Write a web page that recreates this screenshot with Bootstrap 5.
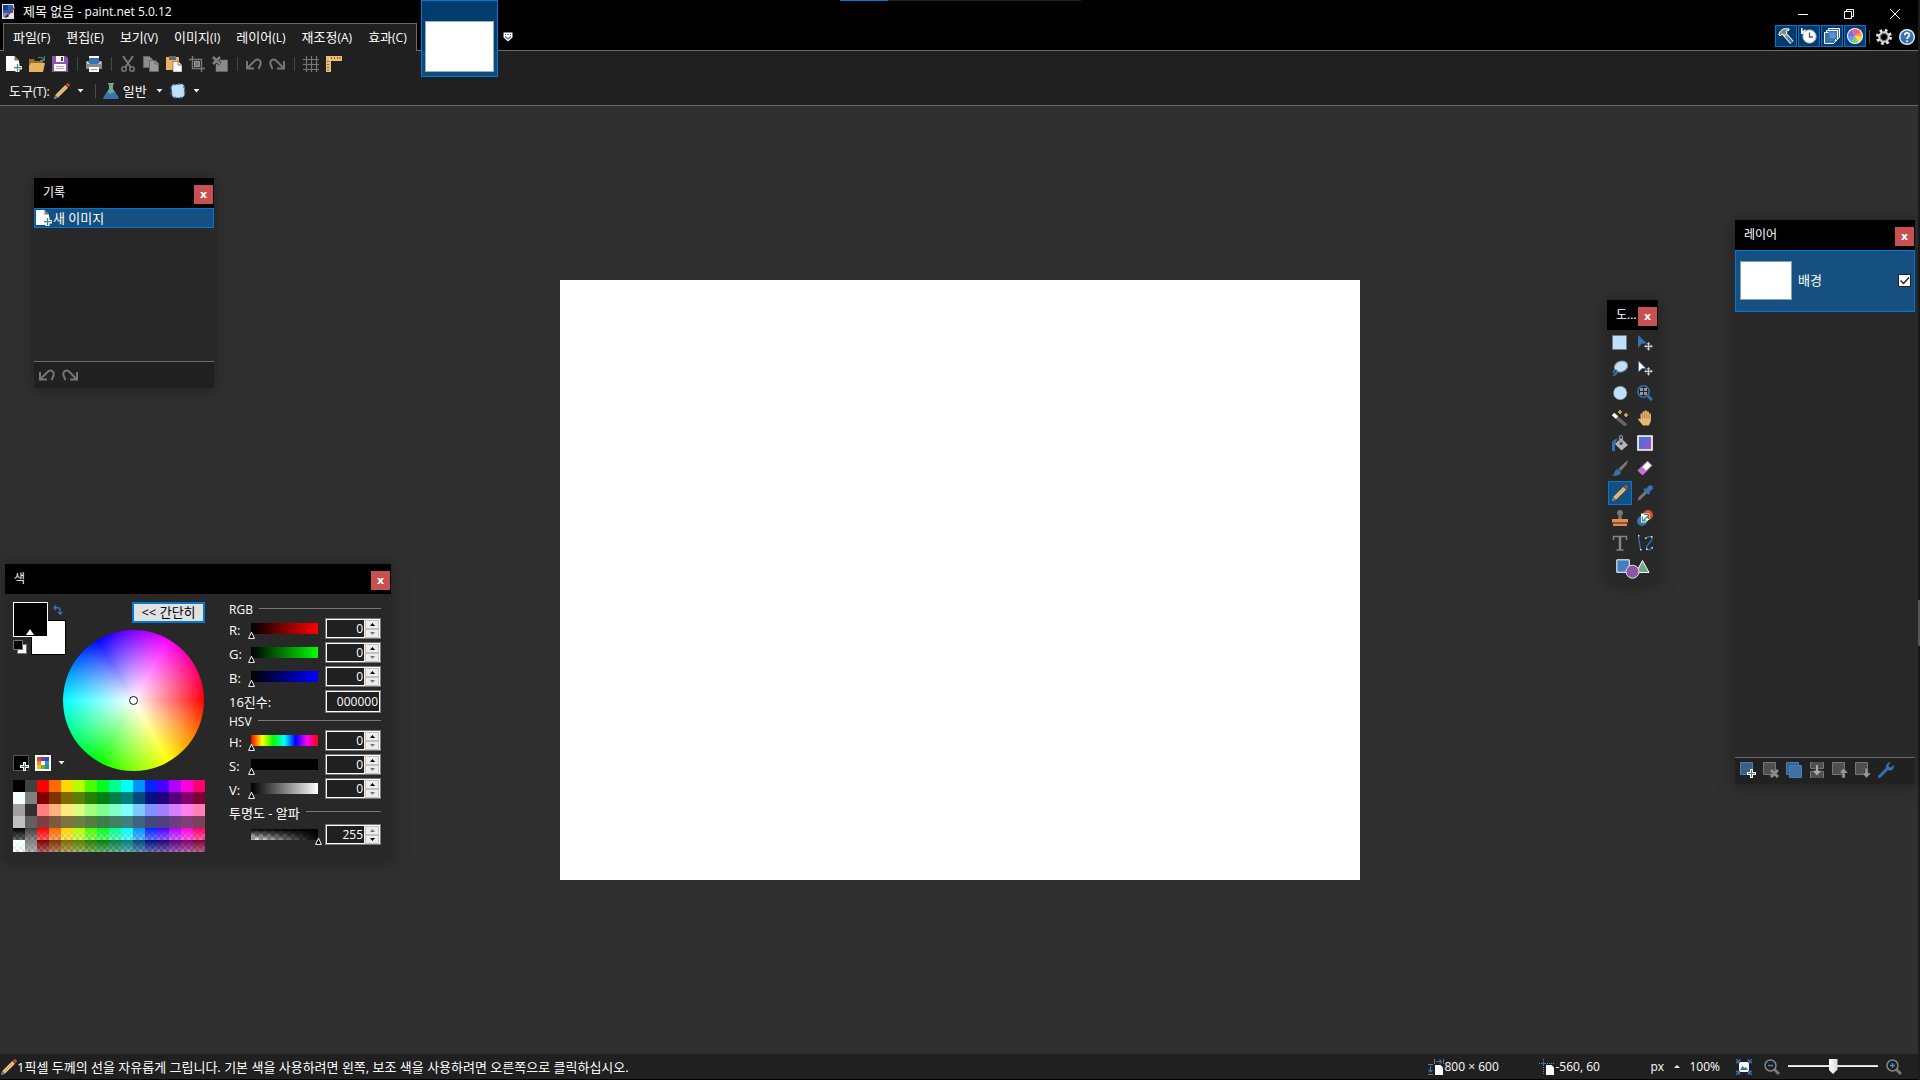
<!DOCTYPE html>
<html lang="ko" data-bs-theme="dark">
<head>
<meta charset="utf-8">
<meta name="viewport" content="width=device-width, initial-scale=1">
<title>제목 없음 - paint.net 5.0.12</title>
<link href="https://cdn.jsdelivr.net/npm/bootstrap@5.3.0/dist/css/bootstrap.min.css" rel="stylesheet">
<style>
:root{--line:#6a6a6a;--bar:#202020;--pane:#282828;--accent:#0078d7;--sel:#155080}
body{font:13px/16px "Open Sans","Noto Sans CJK KR",sans-serif;background:#303030;color:#fff;overflow:hidden}
svg{display:block;flex:none}
.ic{width:16px;height:16px}
.lat{font-size:12px}
button.plain,.tool{background:none;border:0;padding:0;color:inherit;line-height:16px}
.app{border-right:2px solid #1b1b1b}
.edge-mark{right:0;top:600px;width:2px;height:46px;background:#555}
/* header */
.top-bar{background:#000;height:50px}
.title-row{height:23px;padding-left:2px}
.title-row .caption{margin-left:8px}
.win-btns{gap:36px;padding-right:18px;padding-top:4px}
.menu-tab{height:28px;margin-left:3px;border:1px solid var(--line);border-bottom:0;background:var(--bar);padding:0 1px;z-index:1}
.menu-tab a{color:#fff;text-decoration:none;padding:5px 8px}
.toggles{gap:1px;margin-top:2px;padding-right:3px}
.toggles .tog{width:22px;height:22px;border:1px solid var(--accent);background:#003c6c;padding:0 2px}
.toggles .vsep{margin:5px 5px 0 2px}
.toggles .plain{margin-top:2px}
.toggles .plain+.plain{margin-left:6px}
.progress-line{left:840px;top:0;width:241px;height:1px;background:#222}
.progress-line div{width:48px;height:1px;background:var(--accent)}
.doc-tab{left:421px;top:0;width:77px;height:77px;border:1px solid var(--accent);background:linear-gradient(#003c6c 0 50px,#124a78 50px);padding:20px 3px 4px;z-index:2}
.doc-tab span{display:block;height:51px;background:#fff;border:1px solid #8fb2cd}
.doc-more{left:503px;top:32px}
.bars{background:var(--bar);border-top:1px solid var(--line);border-bottom:1px solid var(--line)}
.bar1{height:26px;padding-left:6px;gap:7px}
.bar2{height:28px;padding-left:9px}
.vsep{width:1px;height:14px;background:#4a4a4a}
.bar1 .vsep{margin:0 1px 0 2px}
.bar2 .vsep{margin:0 7px 0 11px}
.caret{width:7px;height:4px}
.caret.up{width:6px;height:3px}
.after-icon{margin-left:7px}
.after-text{margin-left:9px}
.foot-gap{margin-left:12px}
.well-row{gap:6px}
/* work area */
main.work{padding-left:2px}
.canvas-page{width:800px;height:600px;background:#fff}
.pane{position:absolute;background:var(--pane);box-shadow:0 1px 14px 2px rgba(0,0,0,.28)}
.pane-head{height:30px;background:#000;padding:7px 1px 0 9px}
.pane-head .cls{width:19px;height:19px;border:0;padding:0;background:#c75050;color:#fff;font:bold 11px/16px "DejaVu Sans",sans-serif}
.pane-head h2{font-size:12px;line-height:16px;margin:0;font-weight:400}
.pane-foot{background:#212121;border-top:1px solid var(--line);height:27px;gap:7px;padding:0 0 2px 5px}
#history{left:34px;top:72px;width:180px;height:210px}
#history .pane-foot{padding-bottom:0}
#history .entry{height:20px;border:1px solid var(--accent);background:var(--sel);padding-left:1px;gap:1px}
#layers{right:3px;top:114px;width:180px;height:564px}
#layers .layer{height:62px;border:1px solid var(--accent);background:var(--sel);padding:0 3px 2px 4px}
#layers .thumb{width:52px;height:39px;background:#fff;border:1px solid #7ba3c4;margin-right:6px}
.vis{appearance:none;width:13px;height:13px;border:1px solid #222;background:#fff url("data:image/svg+xml,%3Csvg xmlns='http://www.w3.org/2000/svg' viewBox='0 0 11 11'%3E%3Cpath d='M1.5 5.5l3 3L10 2.5' fill='none' stroke='%23222' stroke-width='1.4'/%3E%3C/svg%3E");margin:0}
#tools{right:260px;top:194px;width:51px;height:283px}
.tool-grid{display:grid;grid-template-columns:24px 24px;gap:1px;padding:1px}
.tool{width:24px;height:24px;display:grid;place-items:center}
.tool.on{border:1px solid var(--accent);background:var(--sel)}
.tool.wide{grid-column:1/3;width:100%;height:26px}
/* colour window */
#colors{left:5px;top:458px;width:386px}
.col-body{padding:8px 10px 8px 8px}
.left-side{width:192px}
.well{width:50px;height:169px}
.swatches{width:53px;height:53px;z-index:1}
.swatches i{position:absolute;width:35px;height:35px;border:1px solid #000}
.swatches .sw-a{left:0;top:0;background:#000;border-color:#fff}
.sw-b{left:18px;top:18px;background:#fff}
.swatches .swap{position:absolute;left:40px;top:3px}
.swatches .tip{position:absolute;left:13px;top:27px}
.mini{position:absolute;left:0;top:38px}
.simple{width:73px;height:21px;border:2px solid var(--accent);background:#e1e1e1;color:#000;font-size:13px;line-height:17px;padding:0}
.wheel{width:141px;height:141px;border-radius:50%;margin-top:7px;display:grid;place-items:center;background:radial-gradient(closest-side,#fff,rgba(255,255,255,0)),conic-gradient(from 90deg,red,#ff0,lime,cyan,blue,magenta,red)}
.wheel b{width:9px;height:9px;border:1px solid #111;border-radius:50%;background:#fff}
.pal{display:grid;grid-template-columns:repeat(16,12px);grid-auto-rows:12px;margin-top:9px;background:repeating-conic-gradient(#fff 0 25%,#bbb 0 50%) 0 0/6px 6px}
.right-side{width:152px}
.legend-row{height:16px;gap:6px;align-items:flex-start}
.legend-row hr{flex:1;margin:6px 0 0;border:0;border-top:1px solid #787878;opacity:1}
.legend-row.alpha{height:22px;padding-top:3px}
.field{display:grid;grid-template-columns:22px 74px 56px;height:24px;align-items:start}
.field label{padding-top:4px;white-space:nowrap}
.field .val{grid-column:3}
.sl{appearance:none;width:74px;height:16px;margin:5px 0 0 -3px;padding:0;background:var(--g) no-repeat 3px 0/67px 11px;outline:0}
.sl::-webkit-slider-thumb{appearance:none;width:7px;height:8px;margin-top:7px;border:0;background:url("data:image/svg+xml,%3Csvg xmlns='http://www.w3.org/2000/svg' viewBox='0 0 7 8'%3E%3Cpath d='M3.5 1.2L6.4 7.4H.6z' fill='%23000' stroke='%23fff'/%3E%3C/svg%3E")}
.val{width:56px;height:21px;border:1px solid #787878;background:#fff;padding:1px}
.val input{width:37px;height:17px;border:0;padding:0 1px 1px 0;background:#202020;color:#fff;text-align:right;font-size:12px;line-height:16px;appearance:textfield;outline:0}
.val input::-webkit-inner-spin-button{display:none}
.val.hex{height:23px}.val.hex input{width:100%;height:19px}
.spin{width:15px;background:#f0f0f0}
.spin button{border:1px solid #c4c4c4;background:#ececec;padding:0;height:9px;width:14px;margin-left:1px;display:grid;place-items:center}
.g-r{--g:linear-gradient(90deg,#000,red)}.g-g{--g:linear-gradient(90deg,#000,lime)}.g-b{--g:linear-gradient(90deg,#000,blue)}
.g-h{--g:linear-gradient(90deg,red,#ff0,lime,cyan,blue,magenta,red)}.g-s{--g:linear-gradient(#000,#000)}.g-v{--g:linear-gradient(90deg,#000,#fff)}
.g-a{--p:linear-gradient(var(--pane),var(--pane)) no-repeat;background:var(--p) 0 11px/74px 5px,var(--p) 0 0/3px 16px,var(--p) 70px 0/4px 16px,linear-gradient(90deg,rgba(0,0,0,0),#000) no-repeat 3px 0/67px 11px,linear-gradient(#000,rgba(0,0,0,0)) no-repeat 3px 0/67px 11px,repeating-conic-gradient(#fff 0 25%,#bbb 0 50%) 3px 0/8px 8px}
/* status */
.status{height:26px;background:var(--bar);border-bottom:1px solid #000;padding:0 16px 0 1px}
.status .size{width:111px}.status .pos{width:95px}.status .unit{width:24px}
.zoom-sl{appearance:none;width:90px;height:16px;margin:0 8px;background:linear-gradient(#ccc,#fff) no-repeat 0 6px/90px 2px}
.zoom-sl::-webkit-slider-thumb{appearance:none;width:9px;height:15px;border:0;background:linear-gradient(90deg,#fff,#d8d8d8);clip-path:polygon(0 0,100% 0,100% 70%,50% 100%,0 70%)}
</style>
<script src="https://cdn.jsdelivr.net/npm/bootstrap@5.3.0/dist/js/bootstrap.bundle.min.js"></script>
</head>
<body>
<svg width="0" height="0" class="position-absolute" aria-hidden="true">
<symbol id="new" viewBox="0 0 16 16"><path d="M0 0h8.500L13 4.500V15H0z" fill="#fff"/><path d="M8.500 0v4.500H13z" fill="#777"/><path d="M9.500 7h4v3H16v3.500h-2.500V16h-4v-2.500H7V10h2.500z" fill="#fff"/><path d="M11.500 8v7.500M8 11.700h7.500" stroke="#3f8e73" stroke-width="1.300"/></symbol>
<symbol id="open" viewBox="0 0 16 16"><path d="M0 3h5l1 2h8v3H0z" fill="#96702f"/><path d="M2 7h14l-2 9H0V9z" fill="#e9b263"/><path d="M9 1.500h3.500L15 4M15.500 0v4.500H11" fill="none" stroke="#3f8e73" stroke-width="1.200"/></symbol>
<symbol id="save" viewBox="0 0 16 16"><path d="M0 0h14l2 2v14H0z" fill="#8e54a5"/><path d="M4 0h8v6H4zM2 8h12v7H2z" fill="#fff"/><path d="M9 1h2v4H9z" fill="#444"/><path d="M4 10.500h8M4 12.500h8" stroke="#aaa"/></symbol>
<symbol id="print" viewBox="0 0 16 16"><path d="M3 0h10v6H3z" fill="#fff"/><path d="M0 5h16v8H0z" fill="#8b8b8b"/><path d="M3 2h10v6H3z" fill="#3573b4"/><path d="M3 11h10v5H3z" fill="#fff"/><path d="M5 13.500h6" stroke="#999"/><path d="M1.500 6v1.500h2M14.500 6v1.500h-2" fill="none" stroke="#ddd"/></symbol>
<symbol id="cut" viewBox="0 0 16 16" fill="none" stroke="#777" stroke-width="2"><path d="M3 0l7.500 11M13 0L5.500 11"/><circle cx="4" cy="13" r="2.200" stroke-width="1.600"/><circle cx="12" cy="13" r="2.200" stroke-width="1.600"/></symbol>
<symbol id="copy" viewBox="0 0 16 16" fill="#8d8d8d" stroke="#666"><path d="M.5.500h6l3 3v8h-9z"/><path d="M6.500 4.500h6l3 3v8h-9z" fill="#999"/><path d="M12 4.500V8h3.500" fill="none"/></symbol>
<symbol id="paste" viewBox="0 0 16 16"><path d="M0 1h13v13H0z" fill="#e9b263"/><path d="M3 0h7v4H3z" fill="#666"/><path d="M7 5.500h5.500L16 9v7H7z" fill="#fff" stroke="#555" stroke-width=".6"/><path d="M12 5.500V9h4" fill="none" stroke="#777"/></symbol>
<symbol id="crop" viewBox="0 0 16 16" fill="none" stroke="#777"><path d="M3.500 0v12.500H16M0 3.500h12.500V16" stroke-width="1.400"/><path d="M5.500 5.500h5v5h-5z" fill="#777" stroke="#999"/></symbol>
<symbol id="desel" viewBox="0 0 16 16"><path d="M4 4h11.500v11.500H4z" fill="#8a8a8a" stroke="#777" stroke-dasharray="1 1"/><path d="M1 1l7 7M8 1L1 8" stroke="#202020" stroke-width="4"/><path d="M1 1l7 7M8 1L1 8" stroke="#808080" stroke-width="2.600"/></symbol>
<symbol id="undo" viewBox="0 0 16 16" fill="none" stroke="#767676" stroke-width="2"><path d="M1 5v7.500h7M1.500 12L9 4.500c3-2.500 6.500 0 5.500 4L12.500 13"/></symbol>
<symbol id="grid" viewBox="0 0 16 16" fill="none" stroke="#777" stroke-width="1.200"><path d="M3.500 0v16M8.500 0v16M13.500 0v16M0 3.500h16M0 8.500h16M0 13.500h16"/></symbol>
<symbol id="ruler" viewBox="0 0 16 16"><path d="M0 0h16v5H5v11H0z" fill="#eabf7a"/><path d="M5.500 1v2M8.500 1v2M11.500 1v2M14 1v2M1 5.500h2M1 8.500h2M1 11.500h2M1 14h2" stroke="#8a6426"/><path d="M3 3h1v1H3z" fill="#fff"/></symbol>
<symbol id="pencil" viewBox="0 0 16 16"><path d="M0 16l1.500-4.200L11.300 2l2.700 2.700-9.800 9.800z" fill="#edc27e"/><path d="M3.500 12.500L12 4" stroke="#c9954c" stroke-width=".8"/><path d="M0 16l1.500-4.200 2.700 2.700z" fill="#777"/><path d="M11.800 1.500L13.300 0q2.700 0 2.700 2.700l-1.500 1.500z" fill="#c4432c"/></symbol>
<symbol id="flask" viewBox="0 0 16 16"><path d="M5 0h6v1l-1 1v4l5.500 8.500L15 16H1l-.5-1.500L6 6V2L5 1z" fill="#6fa890"/><path d="M3.500 9.500h2l2 1.500 2-1.500h3l3 5L15 16H1l-.5-1.500z" fill="#3573b4"/></symbol>
<symbol id="blob" viewBox="0 0 16 16"><path d="M3 1.500C6 3 9 0 13 1.500c3 3 0 6 1.500 9.500-.5 4-4 4-7 3.500-3 .5-5 0-5.500-3C3 8-.5 5 3 1.500z" fill="#bfe0fb" stroke="#8ab" stroke-width=".6"/><path d="M4 1.500h0M9 1h0M14 4h0M15 9h0M11 14.500h0M5 14.500h0M1 10h0M1 5h0" stroke="#3573b4" stroke-width="1.800" stroke-linecap="round"/></symbol>
<symbol id="caret" viewBox="0 0 7 4"><path d="M.5 0h6l-3 3.500z" fill="#eee"/></symbol>
<symbol id="zoomg" viewBox="0 0 16 16" fill="none"><path d="M10 10l5 5" stroke="#777" stroke-width="3"/><circle cx="6.500" cy="6.500" r="5.500" stroke="#858585" stroke-width="1.500"/></symbol>
<symbol id="sq" viewBox="0 0 16 16"><path d="M.5.500h12v12H.5z" fill="#4f4f4f" stroke="#757575"/></symbol>
<symbol id="movex" viewBox="0 0 16 16"><path d="M11.500 8v6.500M8.200 11.300h6.600" stroke="#ccc" stroke-width="1.300"/><path d="M9.700 9.200l1.800-2.200 1.800 2.200zM9.700 13.500l1.800 2.200 1.800-2.200zM9.300 9.500L7.100 11.300l2.200 1.800zM13.700 9.500l2.200 1.800-2.200 1.800z" fill="#ccc"/></symbol>
</svg>

<div class="app d-flex flex-column vh-100 position-relative">
<header class="position-relative">
 <div class="top-bar">
  <div class="title-row d-flex justify-content-between">
   <div class="d-flex align-items-center">
    <svg width="13" height="15" viewBox="0 0 13 15"><path d="M0 0h12v15H0z" fill="#dfe6ee"/><path d="M1 1h10v8H1z" fill="#2462c0"/><path d="M1 1h5v5H1z" fill="#173b8a"/><path d="M1 12h6M1 10h5" stroke="#336"/><path d="M13 3L5 12" stroke="#a33" stroke-width="1.500"/><path d="M6 10l-4 4 4-1z" fill="#223"/></svg>
    <span class="caption">제목 없음 <span class="lat">- paint.net 5.0.12</span></span>
   </div>
   <div class="win-btns d-flex">
    <button class="plain" aria-label="최소화"><svg width="10" height="12" viewBox="0 0 10 12"><path d="M0 6.500h10" stroke="#fff"/></svg></button>
    <button class="plain" aria-label="이전 크기로"><svg width="10" height="12" viewBox="0 0 10 12" fill="none" stroke="#fff"><path d="M.5 3.500h7v7h-7zM2.500 3V1.500h7v7H8"/></svg></button>
    <button class="plain" aria-label="닫기"><svg width="10" height="12" viewBox="0 0 10 12" stroke="#fff"><path d="M0 1l10 10M10 1L0 11"/></svg></button>
   </div>
  </div>
  <div class="d-flex justify-content-between align-items-start">
   <nav class="menu-tab d-flex position-relative" aria-label="메뉴">
    <a href="#">파일<span class="lat">(F)</span></a><a href="#">편집<span class="lat">(E)</span></a><a href="#">보기<span class="lat">(V)</span></a><a href="#">이미지<span class="lat">(I)</span></a><a href="#">레이어<span class="lat">(L)</span></a><a href="#">재조정<span class="lat">(A)</span></a><a href="#">효과<span class="lat">(C)</span></a>
   </nav>
   <div class="toggles d-flex">
    <button class="tog" aria-label="도구"><svg class="ic" viewBox="0 0 16 16"><path d="M5.500 5L14 14.500" stroke="#eee" stroke-width="4.500"/><path d="M5.500 5L9.500 9.500" stroke="#888" stroke-width="2.500"/><path d="M9.500 9.500l4.500 5" stroke="#3573b4" stroke-width="2.500"/><path d="M.7 6.500L2.500 3 5.500.800H11v1.500L8.500 3 8.700 5.500 6 8 4.300 5.800 2 8z" fill="#888" stroke="#fff"/></svg></button>
    <button class="tog" aria-label="기록"><svg class="ic" viewBox="0 0 16 16"><circle cx="8.500" cy="8.500" r="6.700" fill="#fff" stroke="#7fa8d2"/><path d="M8.500 4.500V9H12" fill="none" stroke="#555" stroke-width="1.300"/><path d="M.8 0v5.200H6M1.500 4.500L4.500 1.800" fill="none" stroke="#fff" stroke-width="1.600"/></svg></button>
    <button class="tog" aria-label="레이어"><svg class="ic" viewBox="0 0 16 16" stroke="#fff" fill="#3573b4"><path d="M4.500.500h11v9l-2 2h-9z"/><path d="M2.500 2.500h11v9l-2 2h-9z"/><path d="M.5 4.500h11v9l-2 2h-9z"/><path d="M5 4h7v6.500H5z" fill="#5b94ce" stroke="#4179b8"/></svg></button>
    <button class="tog" aria-label="색"><svg class="ic" viewBox="-8 -8 16 16"><circle r="8" fill="#fff"/><path d="M0 0V-7A7 7 0 0 1 6 -3.500z" fill="#ef6a5a"/><path d="M0 0L6-3.500A7 7 0 0 1 7 0z" fill="#f79646"/><path d="M0 0H7A7 7 0 0 1 3.500 6z" fill="#ffd84d"/><path d="M0 0L3.500 6A7 7 0 0 1-3.500 6z" fill="#8bc96a"/><path d="M0 0L-3.500 6A7 7 0 0 1-7 0z" fill="#5aa0ee"/><path d="M0 0H-7A7 7 0 0 1-3.500-6z" fill="#8e62d9"/><path d="M0 0L-3.500-6A7 7 0 0 1 0-7z" fill="#d35fd6"/></svg></button>
    <span class="vsep"></span>
    <button class="plain" aria-label="설정"><svg class="ic" viewBox="-8 -8 16 16" fill="none"><circle r="6.500" stroke="#e4e4e4" stroke-width="3" stroke-dasharray="2.600 2.505"/><circle r="4.600" stroke="#ddd" stroke-width="2.400"/><circle r="3.600" stroke="#777" stroke-width="1.200"/></svg></button>
    <button class="plain" aria-label="도움말"><svg class="ic" viewBox="0 0 16 16"><circle cx="8" cy="8" r="7.300" fill="#3573b4" stroke="#e6eef7" stroke-width="1.400"/><path d="M5.800 6.200c0-3 4.600-3 4.600-.2C10.400 7.800 8 7.800 8 10M8 11.500v1.600" fill="none" stroke="#fff" stroke-width="1.700"/></svg></button>
   </div>
  </div>
 </div>
 <div class="bars">
  <div class="bar1 d-flex align-items-center">
   <button class="plain" aria-label="새로 만들기"><svg class="ic"><use href="#new"/></svg></button>
   <button class="plain" aria-label="열기"><svg class="ic"><use href="#open"/></svg></button>
   <button class="plain" aria-label="저장"><svg class="ic"><use href="#save"/></svg></button>
   <span class="vsep"></span>
   <button class="plain" aria-label="인쇄"><svg class="ic"><use href="#print"/></svg></button>
   <span class="vsep"></span>
   <button class="plain" aria-label="잘라내기"><svg class="ic"><use href="#cut"/></svg></button>
   <button class="plain" aria-label="복사"><svg class="ic"><use href="#copy"/></svg></button>
   <button class="plain" aria-label="붙여넣기"><svg class="ic"><use href="#paste"/></svg></button>
   <button class="plain" aria-label="자르기"><svg class="ic"><use href="#crop"/></svg></button>
   <button class="plain" aria-label="선택 취소"><svg class="ic"><use href="#desel"/></svg></button>
   <span class="vsep"></span>
   <button class="plain" aria-label="실행 취소"><svg class="ic"><use href="#undo"/></svg></button>
   <button class="plain" aria-label="다시 실행"><svg class="ic" viewBox="0 0 16 16"><g transform="matrix(-1 0 0 1 16 0)"><use href="#undo" width="16" height="16"/></g></svg></button>
   <span class="vsep"></span>
   <button class="plain" aria-label="격자"><svg class="ic"><use href="#grid"/></svg></button>
   <button class="plain" aria-label="눈금자"><svg class="ic"><use href="#ruler"/></svg></button>
  </div>
  <div class="bar2 d-flex align-items-center">
   <span>도구<span class="lat">(T):</span></span>
   <button class="plain d-flex align-items-center ms-1" aria-label="연필"><svg class="ic"><use href="#pencil"/></svg><svg class="caret after-icon"><use href="#caret"/></svg></button>
   <span class="vsep"></span>
   <button class="plain d-flex align-items-center"><svg class="ic"><use href="#flask"/></svg><span class="ms-1">일반</span><svg class="caret after-text"><use href="#caret"/></svg></button>
   <button class="plain d-flex align-items-center after-icon" aria-label="선택 모드"><svg class="ic"><use href="#blob"/></svg><svg class="caret after-icon"><use href="#caret"/></svg></button>
  </div>
 </div>
 <div class="progress-line position-absolute"><div></div></div>
 <button class="doc-tab position-absolute" aria-label="제목 없음"><span></span></button>
 <button class="plain doc-more position-absolute" aria-label="이미지 목록"><svg width="10" height="10" viewBox="0 0 10 10"><path d="M.5.500h9v5L5 9.500.5 5.500z" fill="#fff"/><path d="M2 2.500h1M4.500 2.500h1M7 2.500h1" stroke="#333"/><path d="M2 4.500l3 2.500 3-2.500" fill="none" stroke="#3573b4" stroke-width="1.300"/></svg></button>
</header>

<main class="work flex-grow-1 position-relative d-flex align-items-center justify-content-center">
 <div class="canvas-page"></div>

 <section class="pane d-flex flex-column" id="history">
  <div class="pane-head d-flex justify-content-between align-items-start"><h2>기록</h2><button class="cls">x</button></div>
  <div class="entry d-flex align-items-center"><svg class="ic"><use href="#new"/></svg><span>새 이미지</span></div>
  <div class="pane-foot d-flex align-items-center mt-auto">
   <button class="plain" aria-label="실행 취소"><svg class="ic"><use href="#undo"/></svg></button>
   <button class="plain" aria-label="다시 실행"><svg class="ic" viewBox="0 0 16 16"><g transform="matrix(-1 0 0 1 16 0)"><use href="#undo" width="16" height="16"/></g></svg></button>
  </div>
 </section>

 <section class="pane" id="colors">
  <div class="pane-head d-flex justify-content-between align-items-start"><h2>색</h2><button class="cls">x</button></div>
  <div class="col-body d-flex justify-content-between">
   <div class="left-side">
    <div class="d-flex">
     <div class="well d-flex flex-column justify-content-between">
      <div class="swatches position-relative"><i class="sw-b"></i><i class="sw-a"></i>
       <svg class="tip" width="8" height="6" viewBox="0 0 8 6"><path d="M4 0l4 6H0z" fill="#fff"/></svg>
       <svg class="swap" width="10" height="10" viewBox="0 0 10 10" fill="none" stroke="#3573b4" stroke-width="1.400"><path d="M3 .500L1 2.700 3 5M1 2.700h4q2 0 2 2V9M5 7l2.200 2.200L9.500 7"/></svg>
       <svg class="mini" width="14" height="14" viewBox="0 0 14 14"><path d="M4.500 4.500h9v9h-9z" fill="#fff" stroke="#777"/><path d="M.5.500h9v9h-9z" stroke="#777"/></svg>
      </div>
      <div class="well-row d-flex align-items-center">
       <button class="plain" aria-label="색 추가"><svg class="ic" viewBox="0 0 16 16"><path d="M.5.500h15v15H.5z" stroke="#555"/><path d="M10 7h3v3h3v3h-3v3h-3v-3H7v-3h3z" fill="#fff"/><path d="M11.500 8v7M8 11.500h7" stroke="#3f8e73"/></svg></button>
       <button class="plain d-flex align-items-center" aria-label="팔레트"><svg class="ic" viewBox="0 0 16 16"><path d="M0 0h16v16H0z" fill="#fff"/><path d="M2 2h4v4H2z" fill="#d9472f"/><path d="M6 2h4v4H6z" fill="#7d3c98"/><path d="M10 2h4v4h-4z" fill="#3949a5"/><path d="M2 6h4v4H2z" fill="#f08a24"/><path d="M10 6h4v4h-4z" fill="#3c82f0"/><path d="M2 10h4v4H2z" fill="#f5b921"/><path d="M6 10h4v4H6z" fill="#6fae3a"/><path d="M10 10h4v4h-4z" fill="#2c9a5c"/></svg><svg class="caret after-icon"><use href="#caret"/></svg></button>
      </div>
     </div>
     <div class="flex-grow-1 d-flex flex-column"><button class="simple align-self-end">&lt;&lt; 간단히</button><div class="wheel"><b></b></div></div>
    </div>
    <div class="pal" id="pal"></div>
   </div>
   <div class="right-side" id="fields"></div>
  </div>
 </section>

 <section class="pane" id="tools">
  <div class="pane-head d-flex justify-content-between align-items-start"><h2>도...</h2><button class="cls">x</button></div>
  <div class="tool-grid">
   <button class="tool" aria-label="사각형 선택"><svg class="ic" viewBox="0 0 16 16"><path d="M.5.500h14v14H.5z" fill="#bfe0fb" stroke="#777" stroke-dasharray="1 1"/></svg></button>
   <button class="tool" aria-label="선택 픽셀 이동"><svg class="ic" viewBox="0 0 16 16"><path d="M1 0l9 8.500H5L1 13z" fill="#3573b4"/><use href="#movex" width="16" height="16"/></svg></button>
   <button class="tool" aria-label="올가미 선택"><svg class="ic" viewBox="0 0 16 16"><ellipse cx="9" cy="6.500" rx="6.800" ry="5.300" transform="rotate(-20 9 6.500)" fill="#bfe0fb" stroke="#889"/><path d="M1 15.500c2 0 4-2 4-4s-3-2-3.500 0 2 2 4 1" fill="none" stroke="#3573b4" stroke-width="1.500"/></svg></button>
   <button class="tool" aria-label="선택 영역 이동"><svg class="ic" viewBox="0 0 16 16"><path d="M1.500 1l7.500 7.500H5L1.500 12z" fill="#fff" stroke="#3573b4" stroke-width=".8"/><use href="#movex" width="16" height="16"/></svg></button>
   <button class="tool" aria-label="타원 선택"><svg class="ic" viewBox="0 0 16 16"><circle cx="8.200" cy="8" r="6.700" fill="#bfe0fb" stroke="#889" stroke-dasharray="1 1"/></svg></button>
   <button class="tool" aria-label="확대/축소"><svg class="ic" viewBox="0 0 16 16"><path d="M11 11l4 4" stroke="#3573b4" stroke-width="3"/><circle cx="6.500" cy="6.500" r="5.700" fill="#222" stroke="#3573b4" stroke-width="1.600"/><path d="M3 3h3v3H3zM7 3h3v3H7zM3 7h3v3H3zM7 7h3v3H7z" fill="#999"/></svg></button>
   <button class="tool" aria-label="요술봉"><svg class="ic" viewBox="0 0 16 16"><path d="M3 6L14 15.500" stroke="#666" stroke-width="3.500"/><path d="M1 4l4 3.500" stroke="#fff" stroke-width="3.500"/><path d="M8 0v4M6 2h4M14 3v4M12 5h4" stroke="#e9a84a" stroke-width="1.600"/></svg></button>
   <button class="tool" aria-label="팬"><svg class="ic" viewBox="0 0 16 16"><path d="M3.500 10V4q1-1.500 2 0V2q1-1.600 2 0V1q1.200-1.500 2.200 0v1q1-1.500 2.200 0v2q1-1.500 2 0V11l-2 4.500H6L1 9.500q.5-2 2.500-.3z" fill="#e3b672"/><path d="M5.700 4v4.500M7.700 2.500v6M9.800 2.500v6M12 4v4.500" stroke="#a9752d" stroke-width=".7"/></svg></button>
   <button class="tool" aria-label="페인트 통"><svg class="ic" viewBox="0 0 16 16"><path d="M0 16V8q0-3 5.500-4.500L3 9v7z" fill="#3573b4"/><path d="M9 3l7 7-6.500 5.500L3 9z" fill="#b5b5b5"/><path d="M7.500 7V2q1.500-3 3 0v6" fill="none" stroke="#888" stroke-width="1.300"/><circle cx="9" cy="8.500" r="1.500" fill="#444"/></svg></button>
   <button class="tool" aria-label="그라데이션"><svg class="ic" viewBox="0 0 16 16"><defs><linearGradient id="gd" x2="1" y2="1"><stop stop-color="#2f7be0"/><stop offset="1" stop-color="#b04cc0"/></linearGradient></defs><path d="M1 1h14v14H1z" fill="url(#gd)" stroke="#fff" stroke-width="1.600"/></svg></button>
   <button class="tool" aria-label="그림판 붓"><svg class="ic" viewBox="0 0 16 16"><path d="M16 0l-1 4-6 7-2.500-2.500L12.500 3z" fill="#777"/><path d="M6 9l3 3c-1 4-5 4-9 3.500 3-1 2-6 6-6.500z" fill="#3573b4"/></svg></button>
   <button class="tool" aria-label="지우개"><svg class="ic" viewBox="0 0 16 16"><path d="M10.500 1L15 5.500 5.500 15 1 10.500z" fill="#fff" stroke="#9a4fae"/><path d="M5 6.500L9.500 11l-4 4L1 10.500z" fill="#c46fd6"/></svg></button>
   <button class="tool on" aria-label="연필"><svg class="ic"><use href="#pencil"/></svg></button>
   <button class="tool" aria-label="색 선택"><svg class="ic" viewBox="0 0 16 16"><path d="M9.500 6.500L2 14" stroke="#777" stroke-width="3"/><path d="M2.500 12L0 16l4-2z" fill="#777"/><path d="M7 3l2 1 3-3.500q4-1 4 3L12.500 7l.5 2-2 .5L6.500 5z" fill="#3573b4"/></svg></button>
   <button class="tool" aria-label="도장 복제"><svg class="ic" viewBox="0 0 16 16"><circle cx="8" cy="3" r="3" fill="#777"/><path d="M7 4h2l1 5H6z" fill="#777"/><path d="M0 9h16v3.500H0zM1 13.500h14V16H1z" fill="#e8894a"/></svg></button>
   <button class="tool" aria-label="색상 변경"><svg class="ic" viewBox="0 0 16 16"><circle cx="11" cy="5" r="5" fill="#d9532f"/><circle cx="5" cy="11" r="5" fill="#3573b4"/><path d="M4 3.500h8.500V9L9 12.500H4V8z" fill="#fff"/><path d="M11.500 5.500L6 11M5.500 6.500V11H10M7 4.500h4.500V9" fill="none" stroke="#3f8e73" stroke-width="1.200"/></svg></button>
   <button class="tool" aria-label="텍스트"><svg class="ic" viewBox="0 0 16 16"><path d="M1.500 5V1.500h13V5M4.500 15h7" stroke="#858585" stroke-width="1.500" fill="none"/><path d="M8 1v14" stroke="#858585" stroke-width="2.500"/></svg></button>
   <button class="tool" aria-label="선/곡선"><svg class="ic" viewBox="0 0 16 16"><path d="M1.500 2L3.500 14M9 3c4-3 8-1 5 3s-6 6-4 8 3 0 5-1" fill="none" stroke="#3573b4" stroke-width="1.300"/><path d="M1 0h1.500v1.500H1zM3 14h1.500v1.500H3zM8 2.500h1.500V4H8zM14 1h1.500v1.500H14zM9 13.500h1.500V15H9zM14.500 12H16v1.500h-1.500z" fill="#dbe9f7"/></svg></button>
   <button class="tool wide" aria-label="도형"><svg width="34" height="20" viewBox="0 0 34 20"><path d="M.8.800h12.500v12.500H.8z" fill="#4380c0" stroke="#fff"/><path d="M26.500 1.500L33 13.500H20z" fill="#6fa890" stroke="#fff"/><circle cx="16.500" cy="12.700" r="6.500" fill="#8e54a5" stroke="#e8d8ef"/></svg></button>
  </div>
 </section>

 <section class="pane d-flex flex-column" id="layers">
  <div class="pane-head d-flex justify-content-between align-items-start"><h2>레이어</h2><button class="cls">x</button></div>
  <div class="layer d-flex align-items-center"><span class="thumb"></span><label for="vis">배경</label><input type="checkbox" id="vis" class="vis ms-auto" checked></div>
  <div class="pane-foot d-flex align-items-center mt-auto">
   <button class="plain" aria-label="새 레이어 추가"><svg class="ic" viewBox="0 0 16 16"><path d="M.5.500h12v12H.5z" fill="#3f5f80" stroke="#3f7fc0"/><path d="M10 7h3v3h3v3h-3v3h-3v-3H7v-3h3z" fill="#fff"/><path d="M11.500 8v7M8 11.500h7" stroke="#3f8e73"/></svg></button>
   <button class="plain" aria-label="레이어 삭제"><svg class="ic" viewBox="0 0 16 16"><use href="#sq" width="16" height="16"/><path d="M8 8l7 7M15 8l-7 7" stroke="#8c8c8c" stroke-width="3"/></svg></button>
   <button class="plain" aria-label="레이어 복제"><svg class="ic" viewBox="0 0 16 16" fill="#3c5f86" stroke="#3f7fc0"><path d="M.5.500h12v12H.5z"/><path d="M3.500 3.500h12v12h-12z" fill="#4070a5"/></svg></button>
   <button class="plain" aria-label="아래 레이어와 병합"><svg class="ic" viewBox="0 0 16 16"><path d="M1.500 0v6.500h13V0M1.500 16V9.500h13V16" fill="#4f4f4f" stroke="#777"/><path d="M6.500 2.500h3v6h3.500L8 14 3 8.500h3.500z" fill="#aaa" stroke="#333" stroke-width=".6"/></svg></button>
   <button class="plain" aria-label="레이어 위로 이동"><svg class="ic" viewBox="0 0 16 16"><use href="#sq" width="16" height="16"/><path d="M11.500 6L16 11h-3v5h-3v-5H7z" fill="#999" stroke="#444" stroke-width=".6"/></svg></button>
   <button class="plain" aria-label="레이어 아래로 이동"><svg class="ic" viewBox="0 0 16 16"><use href="#sq" width="16" height="16"/><path d="M11.500 16L16 11h-3V6h-3v5H7z" fill="#999" stroke="#444" stroke-width=".6"/></svg></button>
   <button class="plain" aria-label="레이어 속성"><svg class="ic" viewBox="0 0 16 16"><path d="M1.500 14.500L10 6" stroke="#3573b4" stroke-width="3" stroke-linecap="round"/><path d="M13 0L10.500 3l.5 2 2 .5L16 3q.5 5-4 5.500Q7 8 8 4q1.500-4 5-4z" fill="#3573b4"/></svg></button>
  </div>
 </section>
</main>

<footer class="status d-flex align-items-center">
 <svg class="ic"><use href="#pencil"/></svg>
 <span class="me-auto">1픽셀 두께의 선을 자유롭게 그립니다. 기본 색을 사용하려면 왼쪽, 보조 색을 사용하려면 오른쪽으로 클릭하십시오.</span>
 <span class="size d-flex align-items-center lat"><svg class="ic" viewBox="0 0 16 16"><path d="M6.500 0v5M15.500 0v5M0 5.500h5M0 15.500h5" stroke="#777"/><path d="M8 2.500h6M11.500.500l2 2-2 2M2.500 7v6M.5 11l2 2 2-2" fill="none" stroke="#3573b4" stroke-width="1.200"/><path d="M7 6h5.500L15 8.500V16H7z" fill="#fff"/></svg>800 × 600</span>
 <span class="pos d-flex align-items-center lat"><svg class="ic" viewBox="0 0 16 16"><path d="M4.500 0v16M0 4.500h16" stroke="#888" stroke-dasharray="1 1"/><path d="M4.500 2v5M2 4.500h5" stroke="#3573b4"/><path d="M7 6h5.500L15 8.500V16H7z" fill="#fff"/></svg>-560, 60</span>
 <button class="plain unit lat text-start ms-3">px</button>
 <svg class="caret up" viewBox="0 0 6 3"><path d="M0 3h6L3 0z" fill="#eee"/></svg>
 <span class="lat after-text">100%</span>
 <button class="plain ms-3" aria-label="창에 맞춤"><svg class="ic" viewBox="0 0 16 16"><path d="M3 3h10v10H3z" fill="#fff"/><path d="M4 11l2.500-4 2 2L10 8l2 3z" fill="#3573b4"/><path d="M0 0l3.500 3.500M16 0l-3.500 3.500M0 16l3.500-3.500M16 16l-3.500-3.500M0 3.500h3.500V0M16 3.500h-3.500V0M0 12.500h3.500V16M16 12.500h-3.500V16" fill="none" stroke="#3573b4" stroke-width="1.300"/></svg></button>
 <button class="plain foot-gap" aria-label="축소"><svg class="ic" viewBox="0 0 16 16"><use href="#zoomg" width="16" height="16"/><path d="M4 6.500h5" stroke="#3f8be0" stroke-width="1.400"/></svg></button>
 <input type="range" class="zoom-sl" value="50" aria-label="확대/축소">
 <button class="plain" aria-label="확대"><svg class="ic" viewBox="0 0 16 16"><use href="#zoomg" width="16" height="16"/><path d="M4 6.500h5M6.500 4v5" stroke="#3f8be0" stroke-width="1.400"/></svg></button>
</footer>
<div class="edge-mark position-fixed"></div>
</div>
<script>
// default palette: rows 5 and 6 repeat rows 1 and 2, fading to half opacity
const rows=[
"000000 404040 FF0000 FF6A00 FFD800 B6FF00 4CFF00 00FF21 00FF90 00FFFF 0094FF 0026FF 4800FF B200FF FF00DC FF006E",
"F4FFFF 808080 7F0000 7F3300 7F6A00 5B7F00 267F00 007F0E 007F46 007F7F 004A7F 00137F 21007F 57007F 7F006E 7F0037",
"A0A0A0 303030 FF7F7F FFB27F FFE97F DAFF7F A5FF7F 7FFF8E 7FFFC5 7FFFFF 7FC9FF 7F92FF A17FFF D67FFF FF7FED FF7FB6",
"C0C0C0 606060 7F3F3F 7F593F 7F743F 6D7F3F 527F3F 3F7F47 3F7F62 3F7F7F 3F647F 3F497F 503F7F 6B3F7F 7F3F76 7F3F5B"].map(r=>r.split(" "));
const cell=b=>`<span style="background:${b}"></span>`;
document.getElementById("pal").innerHTML=rows.flat().map(c=>cell("#"+c)).join("")+[...rows[0],...rows[1]].map(c=>cell(`linear-gradient(#${c},#${c}90)`)).join("");

const arrow=(d,c)=>`<svg width="5" height="3" viewBox="0 0 5 3"><path d="${d}" fill="${c}"/></svg>`;
const num=(id,name,cls,v,max)=>`<div class="field"><label for="${id}">${name}</label>
<input type="range" class="sl ${cls}" min="0" max="${max}" value="${v}" aria-label="${id}">
<div class="val d-flex"><input type="number" id="${id}" value="${v}"${name?"":' aria-label="알파"'}><div class="spin"><button aria-label="증가">${arrow("M0 3h5L2.500 0z",v?"#777":"#000")}</button><button aria-label="감소">${arrow("M0 0h5L2.500 3z",v?"#000":"#777")}</button></div></div></div>`;
const head=(t,c="")=>`<div class="legend-row d-flex ${c}"><span>${t}</span><hr></div>`;
document.getElementById("fields").innerHTML=
 head("RGB","lat")+num("red","R:","g-r",0,255)+num("green","G:","g-g",0,255)+num("blue","B:","g-b",0,255)+
 `<div class="field"><label for="hex">16진수:</label><div class="val hex d-flex"><input type="text" id="hex" value="000000"></div></div>`+
 head("HSV","lat")+num("hue","H:","g-h",0,359)+num("sat","S:","g-s",0,100)+num("bri","V:","g-v",0,100)+
 head("투명도 - 알파","alpha")+num("alpha","","g-a",255,255);
</script>
</body>
</html>
